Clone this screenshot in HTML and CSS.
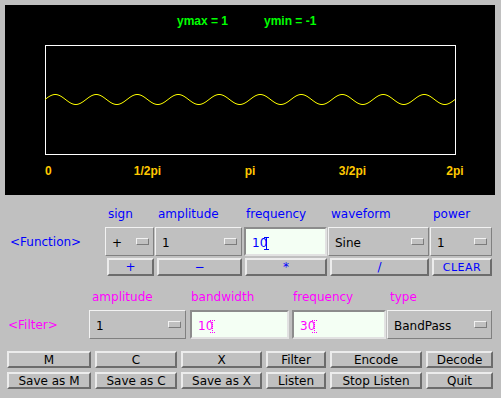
FILE: index.html
```html
<!DOCTYPE html>
<html lang="en">
  <head>
    <meta charset="UTF-8" />
    <title>Sound Applet</title>
    <link rel="stylesheet" href="styles.css">
  </head>
  <body>
    <div class="applet">
      <svg class="plot" width="490" height="190" viewBox="0 0 490 190">
        <text class="ylabel" x="172" y="20">ymax = 1</text>
        <text class="ylabel" x="259" y="20">ymin = -1</text>
        <rect x="40.5" y="40.5" width="410" height="109" fill="none" stroke="#fff" shape-rendering="crispEdges" />
        <polyline id="wave" fill="none" stroke="#ffff00" stroke-width="1" />
        <text class="xlabel" x="40" y="170">0</text>
        <text class="xlabel" x="142.5" y="170" text-anchor="middle">1/2pi</text>
        <text class="xlabel" x="245" y="170" text-anchor="middle">pi</text>
        <text class="xlabel" x="347.5" y="170" text-anchor="middle">3/2pi</text>
        <text class="xlabel" x="450" y="170" text-anchor="middle">2pi</text>
      </svg>

      <div class="panel func">
        <span></span>
        <span class="lbl">sign</span>
        <span class="lbl">amplitude</span>
        <span class="lbl">frequency</span>
        <span class="lbl">waveform</span>
        <span class="lbl">power</span>

        <span class="tag">&lt;Function&gt;</span>
        <div class="choice"><span>+</span><i class="ind"></i></div>
        <div class="choice"><span>1</span><i class="ind"></i></div>
        <div class="field"><span>10</span><svg class="caret" width="5" height="13"><path d="M0 0.5h5M2.5 0v13M0 12.5h5" stroke="#0000ff" fill="none" /></svg></div>
        <div class="choice"><span>Sine</span><i class="ind"></i></div>
        <div class="choice"><span>1</span><i class="ind"></i></div>

        <span></span>
        <button class="btn">+</button>
        <button class="btn">&minus;</button>
        <button class="btn">*</button>
        <button class="btn">/</button>
        <button class="btn clear">CLEAR</button>
      </div>

      <div class="panel filt">
        <span></span>
        <span class="lbl">amplitude</span>
        <span class="lbl">bandwidth</span>
        <span class="lbl">frequency</span>
        <span class="lbl">type</span>

        <span class="tag">&lt;Filter&gt;</span>
        <div class="choice"><span>1</span><i class="ind"></i></div>
        <div class="field"><span>10</span><svg class="caret" width="5" height="13"><path d="M0 0.5h5M2.5 0v13M0 12.5h5" stroke="#ff00ff" stroke-dasharray="1 1" fill="none" /></svg></div>
        <div class="field"><span>30</span><svg class="caret" width="5" height="13"><path d="M0 0.5h5M2.5 0v13M0 12.5h5" stroke="#ff00ff" stroke-dasharray="1 1" fill="none" /></svg></div>
        <div class="choice"><span>BandPass</span><i class="ind"></i></div>
      </div>

      <div class="cmds">
        <button class="btn">M</button>
        <button class="btn">C</button>
        <button class="btn">X</button>
        <button class="btn">Filter</button>
        <button class="btn">Encode</button>
        <button class="btn">Decode</button>
        <button class="btn">Save as M</button>
        <button class="btn">Save as C</button>
        <button class="btn">Save as X</button>
        <button class="btn">Listen</button>
        <button class="btn">Stop Listen</button>
        <button class="btn">Quit</button>
      </div>
    </div>

    <script>
      // y = sin(10x) over 0..2pi, drawn inside the plot frame
      const wave = document.getElementById("wave");
      const points = [];
      for (let i = 0; i <= 410; i++) {
        const y = 94.5 - 5 * Math.sin((10 * 2 * Math.PI * i) / 410);
        points.push(40 + i + "," + y.toFixed(2));
      }
      wave.setAttribute("points", points.join(" "));
    </script>
  </body>
</html>
```

FILE: styles.css
```css
* {
  box-sizing: border-box;
}
body {
  margin: 0;
  background: #c0c0c0;
  font-family: "DejaVu Sans", sans-serif;
  font-size: 12px;
}
.applet {
  padding: 5px 0 0 5px;
  width: 501px;
}
.plot {
  display: block;
  background: #000;
}
.plot text {
  font-family: "Liberation Sans", Arial, sans-serif;
  font-weight: bold;
  font-size: 12px;
}
.ylabel {
  fill: #00ff00;
}
.xlabel {
  fill: #ffc800;
}

.panel {
  display: grid;
}
.func {
  grid-template-columns: 100px 50px 88px 85px 102px 63px;
  grid-template-rows: 32px 29px 20px;
}
.filt {
  grid-template-columns: 84px 99px 102px 97px 107px;
  grid-template-rows: 34px 29px;
}
.lbl {
  align-self: end;
  padding: 0 0 6px 3px;
  line-height: 14px;
  color: #0000ff;
}
.filt .lbl {
  color: #ff00ff;
}
.tag {
  align-self: center;
  padding-left: 5px;
  color: #0000ff;
}
.filt .tag {
  padding-left: 3px;
  color: #ff00ff;
}

.choice {
  display: flex;
  align-items: center;
  justify-content: space-between;
  margin-right: 1px;
  padding: 3px 4px 0 6px;
  border: 1px solid;
  border-color: #f2f2f2 #808080 #808080 #f2f2f2;
  color: #000;
}
.filt .choice {
  margin-right: 2px;
}
.ind {
  width: 13px;
  height: 7px;
  margin-top: -3px;
  border: 1px solid;
  border-color: #f2f2f2 #7c7c7c #7c7c7c #f2f2f2;
}

.field {
  display: flex;
  align-items: center;
  margin: 0 1px;
  padding: 3px 0 0 6px;
  background: #f4fff4;
  border: 2px solid;
  border-color: #8c8c8c #e2e2e2 #e2e2e2 #8c8c8c;
  color: #0000ff;
}
.filt .field {
  margin: 0 1px 0 2px;
  color: #ff00ff;
}
.caret {
  margin-left: -3px;
}

.btn {
  padding: 0;
  font: inherit;
  background: #c0c0c0;
  border: 2px solid;
  border-color: #ececec #6c6c6c #6c6c6c #ececec;
  color: #000;
}
.func .btn {
  margin: 2px 1px 0 2px;
  color: #0000ff;
}
.clear {
  font-size: 11px;
  letter-spacing: 0.5px;
}

.cmds {
  display: grid;
  grid-template-columns: 84px 82px 81px 60px 92px 67px;
  grid-auto-rows: 17px;
  gap: 4px;
  margin: 12px 0 0 2px;
}
```
